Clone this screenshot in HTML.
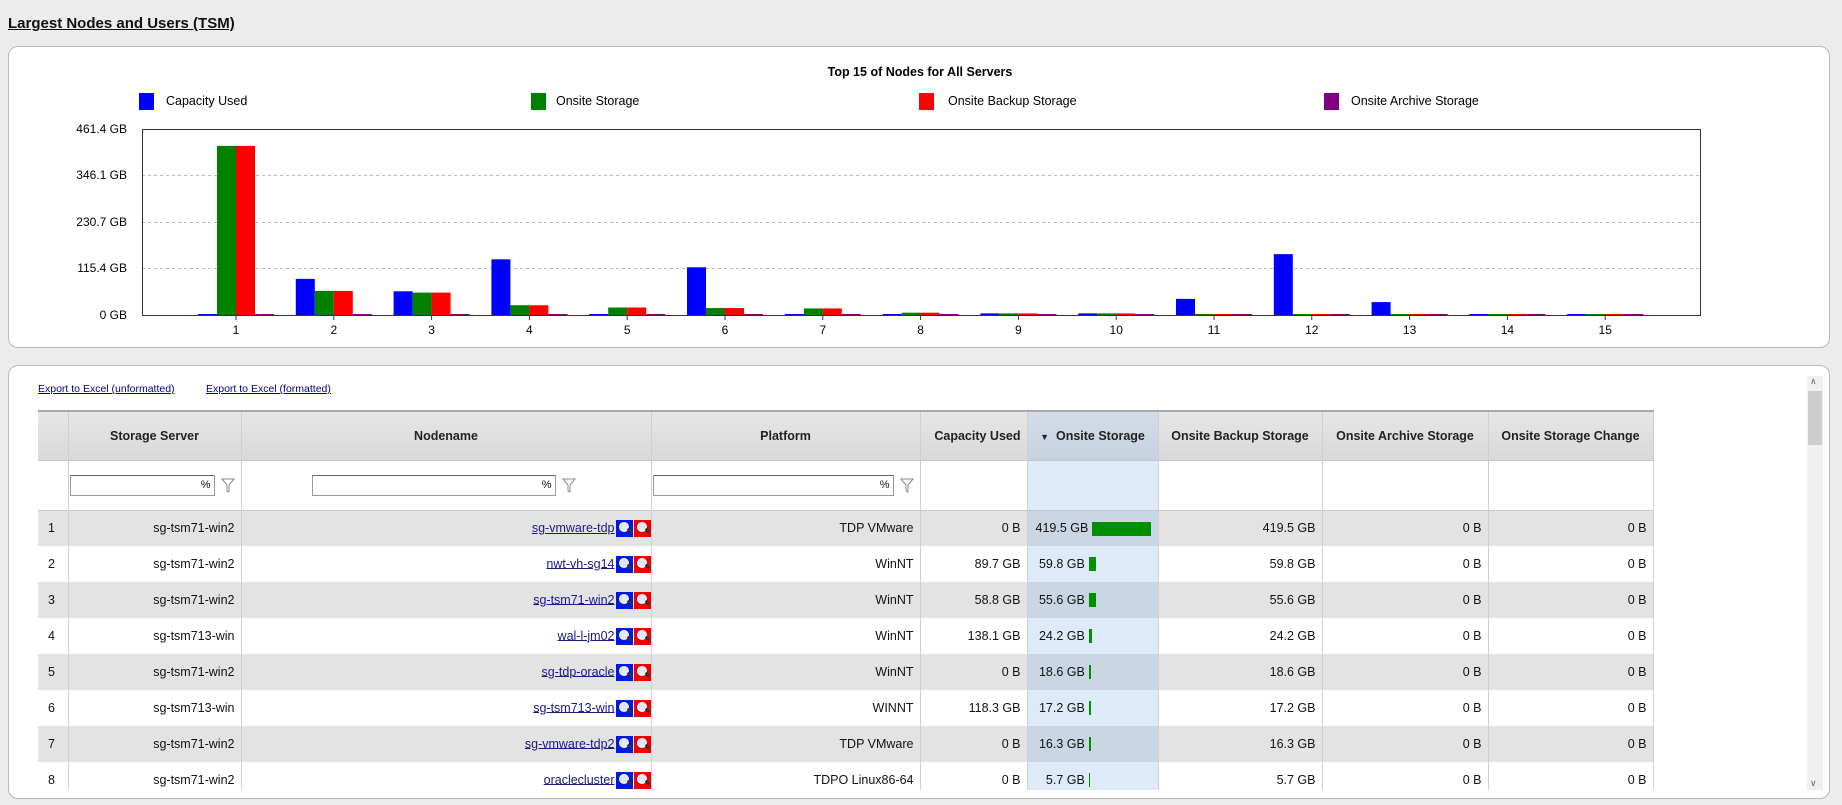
<!DOCTYPE html>
<html><head><meta charset="utf-8">
<style>
*{box-sizing:border-box}
body{margin:0;width:1842px;height:805px;background:#ececec;font-family:"Liberation Sans",Arial,sans-serif;position:relative;overflow:hidden;color:#111}
.title{position:absolute;left:8px;top:15px;font-weight:bold;font-size:15px;text-decoration:underline}
.panel{position:absolute;left:8px;width:1822px;background:#fff;border:1px solid #b8b8b8;border-radius:10px}
.lnk{position:absolute;top:383px;font-size:10.5px;color:#000080;text-decoration:underline}
.clip{position:absolute;left:0;top:0;width:1842px;height:790px;overflow:hidden}
table{position:absolute;left:38px;top:410px;border-collapse:collapse;table-layout:fixed;font-size:12.5px}
td,th{border-right:1px solid #d0d0d0;padding:0 6px;white-space:nowrap;overflow:hidden}
th{height:49px;background:linear-gradient(#e6e6e6,#d9d9d9);font-weight:bold;font-size:12.5px;color:#222;border-top:2px solid #aaa;border-bottom:1px solid #c8c8c8}
th.s{background:linear-gradient(#d3dde8,#c5d2e0)}
tr.f td{height:50px;background:#fff;border-bottom:1px solid #c8c8c8}
tr.d td{height:36px;text-align:right}
tr.d:nth-child(even) td{background:#fff}
tr.d:nth-child(odd) td{background:#e3e3e3}
tr.d:nth-child(even) td.s,tr.f td.s{background:#ddebf8}
tr.d:nth-child(odd) td.s{background:#c9d6e3}
td.n{text-align:left!important;padding-left:10px}
.inp{display:inline-block;height:21px;border:1px solid #999;border-top-color:#666;background:#fff;text-align:right;font-size:11px;padding:3px 3px 0 0;vertical-align:middle}
.fun{display:inline-block;vertical-align:middle;margin-left:6px}
a{color:#1a1a80;text-decoration:underline}
.ic{display:inline-block;width:17px;height:17px;vertical-align:middle;margin-left:1px;position:relative}
.ic.b{background:#0018e0}.ic.r{background:#ee0000}
.ic:before{content:"";position:absolute;left:3px;top:2px;width:8px;height:8px;border-radius:50%;background:#dfe8ff;border:1px solid #fff}
.ic:after{content:"";position:absolute;left:11px;top:9px;width:5px;height:3px;background:#333;transform:rotate(45deg)}
.bar{display:inline-block;height:14px;background:#009000;vertical-align:middle;margin-left:4px}
td.s{text-align:left!important;padding-left:8px}
</style></head><body>
<div class="title">Largest Nodes and Users (TSM)</div>
<div class="panel" style="top:46px;height:302px"></div>
<svg style="position:absolute;left:0;top:0" width="1842" height="360" font-family="Liberation Sans,Arial,sans-serif">
<text x="920" y="76" text-anchor="middle" font-size="12.5" font-weight="bold">Top 15 of Nodes for All Servers</text>
<rect x="139" y="93" width="15" height="17" fill="#0000ff"/><text x="166" y="105" font-size="12.5">Capacity Used</text>
<rect x="531" y="93" width="15" height="17" fill="#008000"/><text x="556" y="105" font-size="12.5">Onsite Storage</text>
<rect x="919" y="93" width="15" height="17" fill="#ff0000"/><text x="948" y="105" font-size="12.5">Onsite Backup Storage</text>
<rect x="1324" y="93" width="15" height="17" fill="#800080"/><text x="1351" y="105" font-size="12.5">Onsite Archive Storage</text>
<g font-size="12" text-anchor="end"><text x="127" y="133">461.4 GB</text><text x="127" y="179">346.1 GB</text><text x="127" y="226">230.7 GB</text><text x="127" y="272">115.4 GB</text><text x="127" y="319">0 GB</text></g>
<g stroke="#bbb" stroke-dasharray="3,3"><line x1="142" y1="175.5" x2="1701" y2="175.5"/><line x1="142" y1="222.5" x2="1701" y2="222.5"/><line x1="142" y1="268.5" x2="1701" y2="268.5"/></g>
<rect x="142.5" y="129.5" width="1558" height="186" fill="none" stroke="#333"/>
<g>
<rect x="217" y="145.9" width="19" height="169.1" fill="#008000"/><rect x="236" y="145.9" width="19" height="169.1" fill="#ff0000"/>
</g>
<g id="bars"></g>
<g font-size="12" text-anchor="middle" id="xl"></g>
</svg>
<div class="panel" style="top:365px;height:434px"></div>
<div class="lnk" style="left:38px">Export to Excel (unformatted)</div>
<div class="lnk" style="left:206px">Export to Excel (formatted)</div>
<div style="position:absolute;left:1807px;top:376px;width:16px;height:414px;background:#f0f0f0"></div>
<div style="position:absolute;left:1808px;top:391px;width:14px;height:54px;background:#cdcdcd"></div>
<div style="position:absolute;left:1810px;top:376px;font-size:9px;color:#666">&#8743;</div>
<div style="position:absolute;left:1810px;top:778px;font-size:9px;color:#666">&#8744;</div>
<div class="clip">
<table>
<colgroup><col style="width:30px"><col style="width:173px"><col style="width:410px"><col style="width:269px"><col style="width:107px"><col style="width:131px"><col style="width:164px"><col style="width:166px"><col style="width:165px"></colgroup>
<tr><th></th><th>Storage Server</th><th>Nodename</th><th>Platform</th><th style="text-align:right">Capacity Used</th><th class="s"><span style="font-size:9px">&#9660;</span>&nbsp; Onsite Storage</th><th>Onsite Backup Storage</th><th>Onsite Archive Storage</th><th>Onsite Storage Change</th></tr>
<tr class="f"><td></td><td style="padding:0 0 0 1px"><span class="inp" style="width:145px">%</span><svg class="fun" width="14" height="16"><path d="M1 2H13L8 8V15L6 14V8Z" fill="none" stroke="#888"/></svg></td><td style="padding-left:70px"><span class="inp" style="width:244px">%</span><svg class="fun" width="14" height="16"><path d="M1 2H13L8 8V15L6 14V8Z" fill="none" stroke="#888"/></svg></td><td style="padding:0 0 0 1px"><span class="inp" style="width:241px">%</span><svg class="fun" width="14" height="16"><path d="M1 2H13L8 8V15L6 14V8Z" fill="none" stroke="#888"/></svg></td><td></td><td class="s"></td><td></td><td></td><td></td></tr>
<tr class="d"><td class="n">1</td><td>sg-tsm71-win2</td><td style="padding-right:0"><a>sg-vmware-tdp</a><span class="ic b"></span><span class="ic r"></span></td><td>TDP VMware</td><td>0 B</td><td class="s">419.5 GB<span class="bar" style="width:59px"></span></td><td>419.5 GB</td><td>0 B</td><td>0 B</td></tr>
<tr class="d"><td class="n">2</td><td>sg-tsm71-win2</td><td style="padding-right:0"><a>nwt-vh-sg14</a><span class="ic b"></span><span class="ic r"></span></td><td>WinNT</td><td>89.7 GB</td><td class="s">&nbsp;59.8 GB<span class="bar" style="width:7px"></span></td><td>59.8 GB</td><td>0 B</td><td>0 B</td></tr>
<tr class="d"><td class="n">3</td><td>sg-tsm71-win2</td><td style="padding-right:0"><a>sg-tsm71-win2</a><span class="ic b"></span><span class="ic r"></span></td><td>WinNT</td><td>58.8 GB</td><td class="s">&nbsp;55.6 GB<span class="bar" style="width:7px"></span></td><td>55.6 GB</td><td>0 B</td><td>0 B</td></tr>
<tr class="d"><td class="n">4</td><td>sg-tsm713-win</td><td style="padding-right:0"><a>wal-l-jm02</a><span class="ic b"></span><span class="ic r"></span></td><td>WinNT</td><td>138.1 GB</td><td class="s">&nbsp;24.2 GB<span class="bar" style="width:3px"></span></td><td>24.2 GB</td><td>0 B</td><td>0 B</td></tr>
<tr class="d"><td class="n">5</td><td>sg-tsm71-win2</td><td style="padding-right:0"><a>sg-tdp-oracle</a><span class="ic b"></span><span class="ic r"></span></td><td>WinNT</td><td>0 B</td><td class="s">&nbsp;18.6 GB<span class="bar" style="width:2px"></span></td><td>18.6 GB</td><td>0 B</td><td>0 B</td></tr>
<tr class="d"><td class="n">6</td><td>sg-tsm713-win</td><td style="padding-right:0"><a>sg-tsm713-win</a><span class="ic b"></span><span class="ic r"></span></td><td>WINNT</td><td>118.3 GB</td><td class="s">&nbsp;17.2 GB<span class="bar" style="width:2px"></span></td><td>17.2 GB</td><td>0 B</td><td>0 B</td></tr>
<tr class="d"><td class="n">7</td><td>sg-tsm71-win2</td><td style="padding-right:0"><a>sg-vmware-tdp2</a><span class="ic b"></span><span class="ic r"></span></td><td>TDP VMware</td><td>0 B</td><td class="s">&nbsp;16.3 GB<span class="bar" style="width:2px"></span></td><td>16.3 GB</td><td>0 B</td><td>0 B</td></tr>
<tr class="d"><td class="n">8</td><td>sg-tsm71-win2</td><td style="padding-right:0"><a>oraclecluster</a><span class="ic b"></span><span class="ic r"></span></td><td>TDPO Linux86-64</td><td>0 B</td><td class="s">&nbsp;&nbsp;&nbsp;5.7 GB<span class="bar" style="width:1px"></span></td><td>5.7 GB</td><td>0 B</td><td>0 B</td></tr>
</table>
</div>
<script>
var v=[[0,419.5],[89.7,59.8],[58.8,55.6],[138.1,24.2],[0,18.6],[118.3,17.2],[0,16.3],[0,5.7],[4,4],[4,4],[40,1],[151,1],[32,1],[1,1],[1,1]];
var s="",x="",k=186/461.4;
for(var i=0;i<15;i++){var c=236+i*97.8;
var hb=Math.max(v[i][0]*k,1),hg=Math.max(v[i][1]*k,1);
s+='<rect x="'+(c-38)+'" y="'+(315-hb)+'" width="19" height="'+hb+'" fill="#0000ff"/>';
if(i>0){s+='<rect x="'+(c-19)+'" y="'+(315-hg)+'" width="19" height="'+hg+'" fill="#008000"/><rect x="'+c+'" y="'+(315-hg)+'" width="19" height="'+hg+'" fill="#ff0000"/>';}
s+='<rect x="'+(c+19)+'" y="314" width="19" height="1" fill="#800080"/>';
x+='<line x1="'+c+'" y1="315" x2="'+c+'" y2="320" stroke="#333"/><text x="'+c+'" y="334">'+(i+1)+'</text>';}
document.getElementById('bars').innerHTML=s;document.getElementById('xl').innerHTML=x;
</script>
</body></html>
